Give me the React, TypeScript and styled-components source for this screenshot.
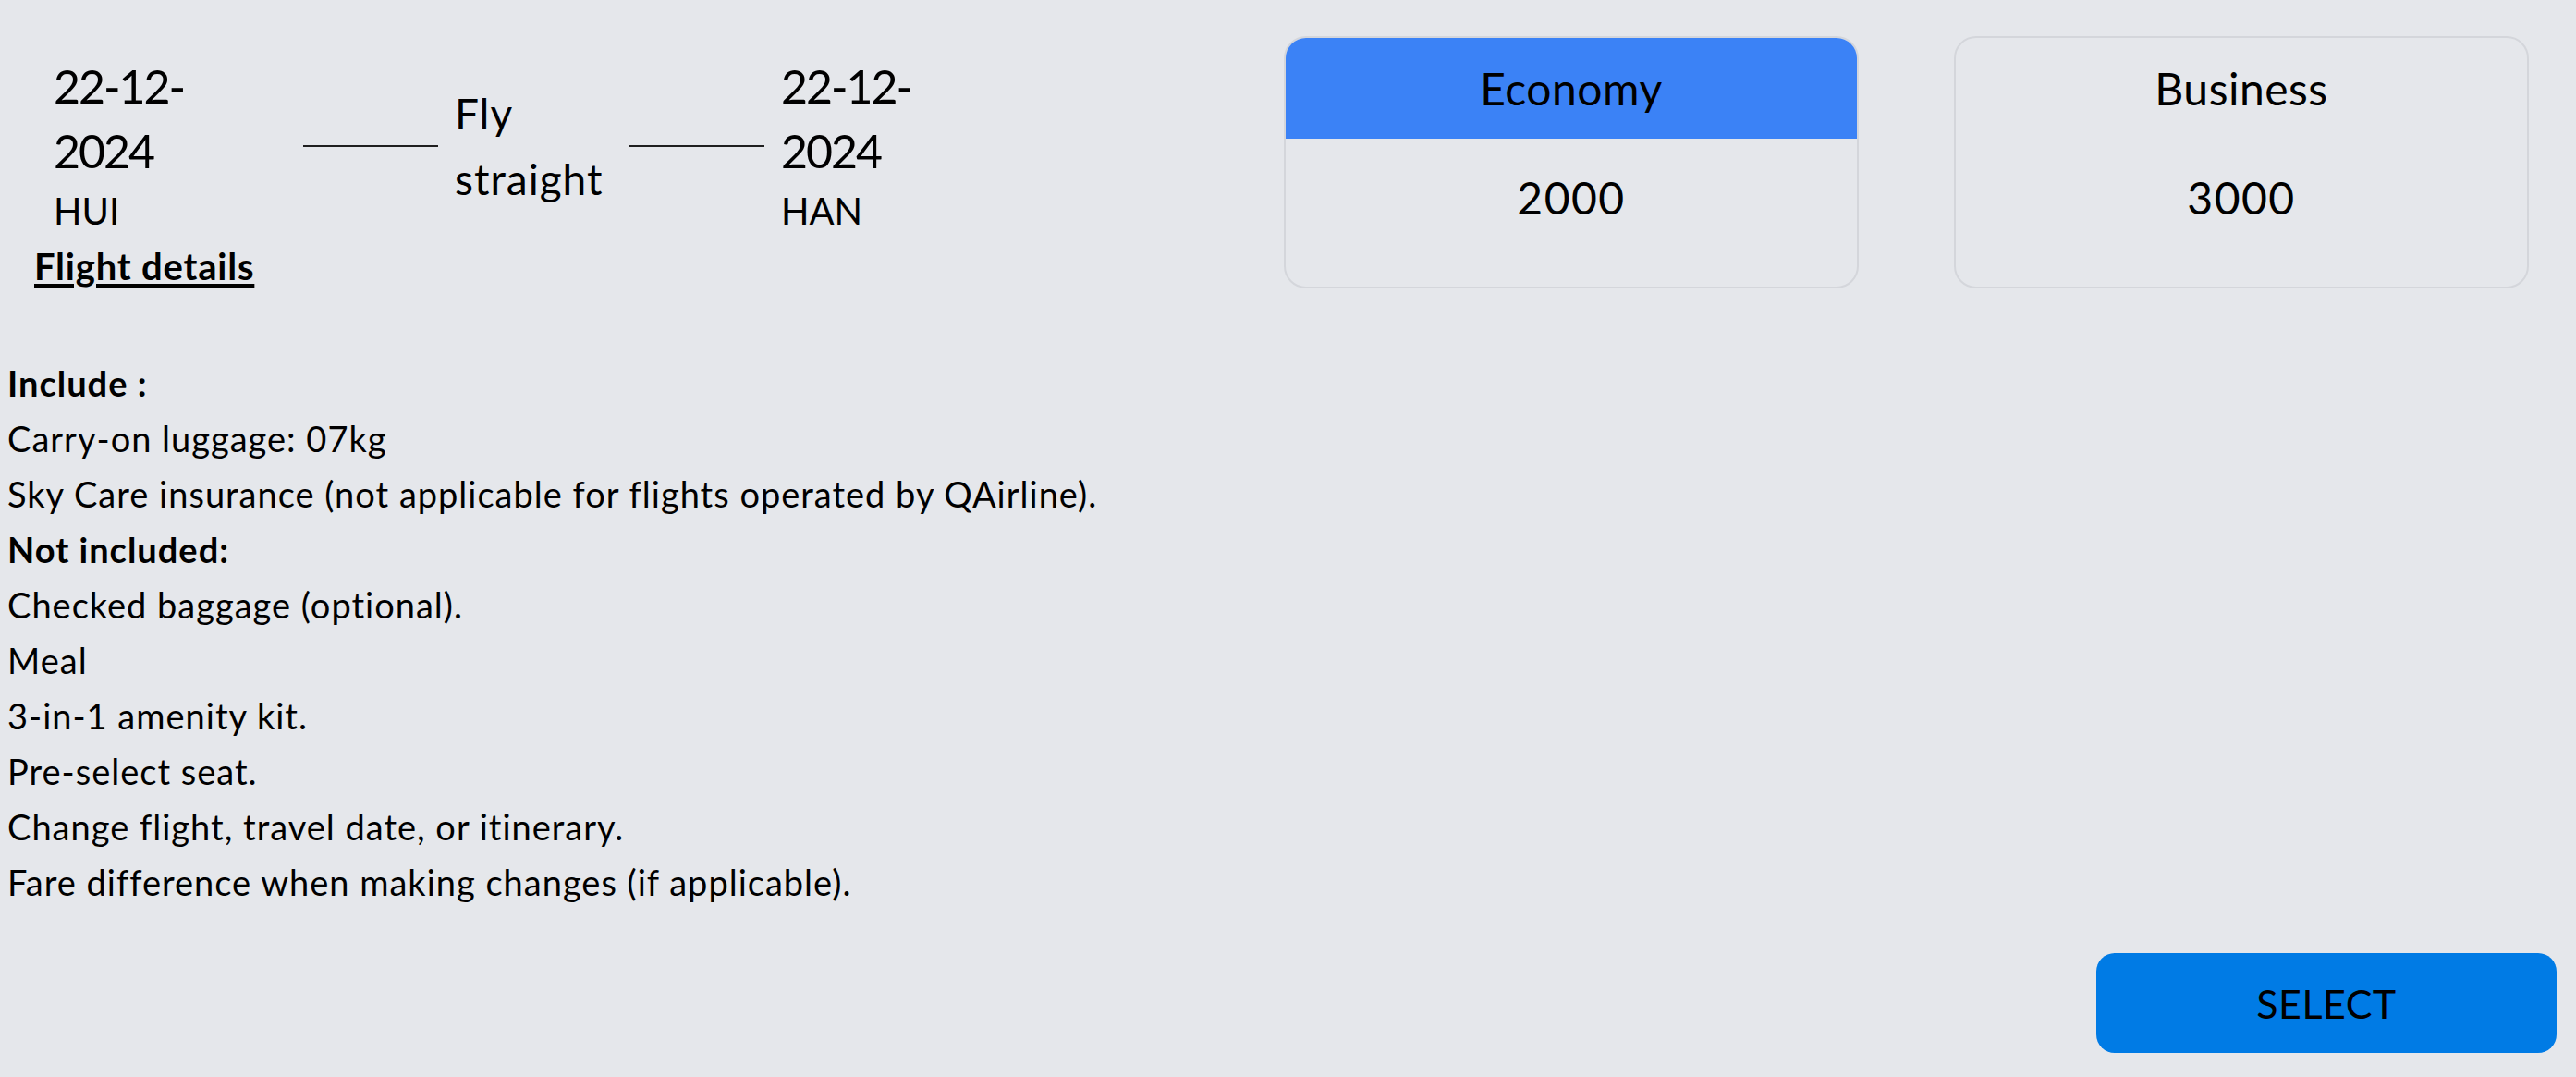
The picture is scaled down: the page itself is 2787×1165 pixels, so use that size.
import React from "react";
import styled, {createGlobalStyle} from "styled-components";

const GlobalStyle = createGlobalStyle`
  html {
    background: #e5e7eb;
  }

  body {
    margin: 8px;
    background: #e5e7eb;
    font-family: Lato, "Liberation Sans", sans-serif;
    color: #000;
  }
`;

const TopRow = styled.div`
  display: flex;
  align-items: flex-start;
`;

const FlightInfo = styled.div`
  flex: 1;
  display: flex;
  flex-direction: column;
  padding: 50px 0 0 29px;
`;

const FlightRow = styled.div`
  display: flex;
  align-items: center;
  gap: 18px;
`;

const DateBlock = styled.div<{$width: number; $inset?: boolean}>`
  width: ${p => p.$width}px;
  padding-left: ${p => (p.$inset ? 21 : 0)}px;
  box-sizing: border-box;
`;

const DateValue = styled.div`
  max-width: 160px;
  font-size: 50px;
  line-height: 70px;
  letter-spacing: -2px;
`;

const AirportCode = styled.div`
  font-size: 40px;
  line-height: 60px;
`;

const Connector = styled.div`
  width: 146px;
  height: 2px;
  background: #1f1f1f;
`;

const RouteLabel = styled.div`
  width: 171px;
  font-size: 46px;
  line-height: 71px;
  letter-spacing: 1px;
`;

const DetailsLink = styled.a`
  align-self: flex-start;
  font-size: 40px;
  line-height: 60px;
  font-weight: 700;
  letter-spacing: 0.8px;
  color: #000;
  text-decoration: underline;
  text-underline-offset: 4px;
  cursor: pointer;
`;

const FareGroup = styled.div`
  display: flex;
  gap: 103px;
  margin: 31px 43px 0 0;
`;

const FareCard = styled.div`
  width: 622px;
  height: 273px;
  box-sizing: border-box;
  border: 2px solid #d4d6db;
  border-radius: 24px;
  overflow: hidden;
  display: flex;
  flex-direction: column;
  cursor: pointer;
`;

const FareHeader = styled.div<{$active: boolean}>`
  height: 109px;
  display: flex;
  align-items: center;
  justify-content: center;
  background: ${p => (p.$active ? "#3b82f6" : "transparent")};
  font-size: 48px;
  line-height: 1.2;
  letter-spacing: 0.5px;
`;

const FarePrice = styled.div`
  padding-top: 35px;
  text-align: center;
  font-size: 48px;
  line-height: 1.2;
  letter-spacing: 1.5px;
`;

const Conditions = styled.div`
  margin-top: 66px;
  font-size: 38px;
  line-height: 60px;
  letter-spacing: 1px;
`;

const ConditionTitle = styled.div`
  font-weight: 700;
`;

const ButtonRow = styled.div`
  display: flex;
  justify-content: flex-end;
  margin-top: 47px;
  padding-right: 13px;
`;

const SelectButton = styled.button`
  width: 498px;
  height: 108px;
  border: none;
  border-radius: 20px;
  background: #007be5;
  color: #000;
  font-family: Lato, "Liberation Sans", sans-serif;
  font-size: 43px;
  letter-spacing: 0.5px;
  cursor: pointer;
`;

type Fare = {name: string; price: number};

const fares: Fare[] = [
  {name: "Economy", price: 2000},
  {name: "Business", price: 3000},
];

const included = [
  "Carry-on luggage: 07kg",
  "Sky Care insurance (not applicable for flights operated by QAirline).",
];

const notIncluded = [
  "Checked baggage (optional).",
  "Meal",
  "3-in-1 amenity kit.",
  "Pre-select seat.",
  "Change flight, travel date, or itinerary.",
  "Fare difference when making changes (if applicable).",
];

const App: React.FC = () => {
  const [selected, setSelected] = React.useState("Economy");

  return (
    <>
      <GlobalStyle/>
      <TopRow>
        <FlightInfo>
          <FlightRow>
            <DateBlock $width={273} $inset>
              <DateValue>22-12-2024</DateValue>
              <AirportCode>HUI</AirportCode>
            </DateBlock>
            <Connector/>
            <RouteLabel>Fly straight</RouteLabel>
            <Connector/>
            <DateBlock $width={200}>
              <DateValue>22-12-2024</DateValue>
              <AirportCode>HAN</AirportCode>
            </DateBlock>
          </FlightRow>
          <DetailsLink>Flight details</DetailsLink>
        </FlightInfo>
        <FareGroup>
          {fares.map(fare => (
            <FareCard key={fare.name} onClick={() => setSelected(fare.name)}>
              <FareHeader $active={selected === fare.name}>{fare.name}</FareHeader>
              <FarePrice>{fare.price}</FarePrice>
            </FareCard>
          ))}
        </FareGroup>
      </TopRow>
      <Conditions>
        <ConditionTitle>Include :</ConditionTitle>
        {included.map(item => <div key={item}>{item}</div>)}
        <ConditionTitle>Not included:</ConditionTitle>
        {notIncluded.map(item => <div key={item}>{item}</div>)}
      </Conditions>
      <ButtonRow>
        <SelectButton>SELECT</SelectButton>
      </ButtonRow>
    </>
  );
};

export default App;
